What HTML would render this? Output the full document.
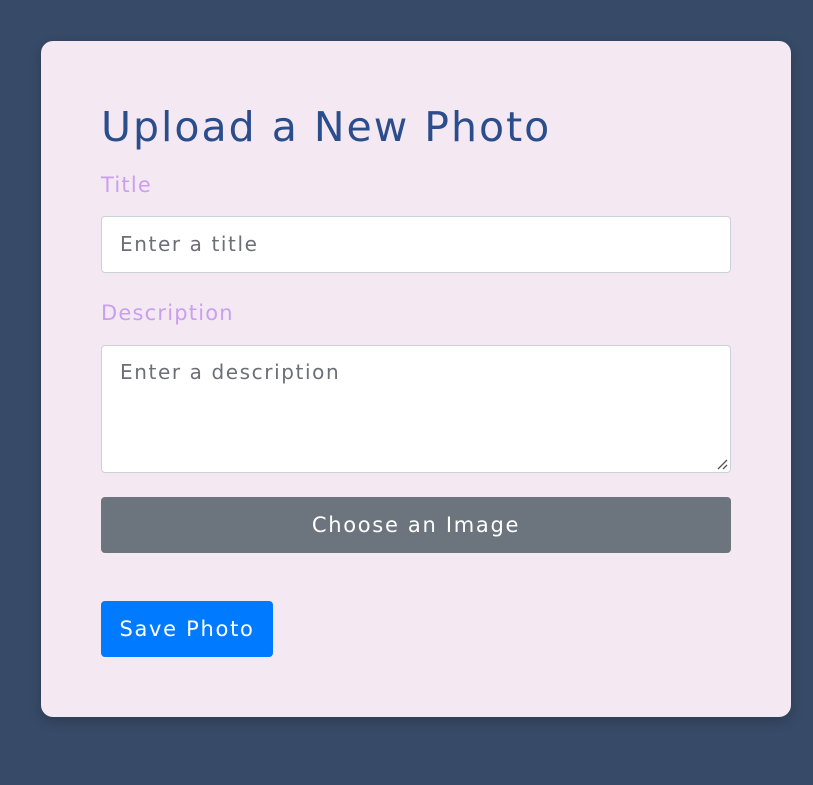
<!DOCTYPE html>
<html><head><style>
html,body{margin:0;padding:0;}
body{width:813px;height:785px;background:#374a67;font-family:"DejaVu Sans","Liberation Sans",sans-serif;position:relative;overflow:hidden;}
.card{position:absolute;left:41px;top:41px;width:750px;height:676px;background:#f4e8f3;border-radius:12px;box-shadow:0 4px 12px rgba(0,0,0,.2);}
h1{position:absolute;left:60px;top:60px;margin:0;font-weight:normal;font-size:41px;color:#2b4d8c;letter-spacing:2px;line-height:52px;white-space:nowrap;}
.lbl{position:absolute;left:60px;font-size:21px;color:#c9a0ee;font-weight:normal;letter-spacing:1.2px;}
.inp{position:absolute;left:60px;background:#fff;border:1px solid #cdd1d8;border-radius:4px;box-sizing:border-box;width:630px;}
.ph{position:absolute;left:18px;font-size:20px;color:#6c6f75;font-weight:normal;letter-spacing:1.6px;white-space:nowrap;}
.btn{position:absolute;border-radius:4px;color:#fff;font-size:21px;text-align:center;letter-spacing:1.7px;font-weight:normal;}
</style></head><body>
<div class="card">
<h1>Upload a New Photo</h1>
<div class="lbl" style="top:132px">Title</div>
<div class="inp" style="top:175px;height:57px"><div class="ph" style="top:15px">Enter a title</div></div>
<div class="lbl" style="top:260px">Description</div>
<div class="inp" style="top:304px;height:128px"><div class="ph" style="top:14px">Enter a description</div>
<svg style="position:absolute;right:2px;bottom:2px" width="12" height="12"><path d="M2 11L11 2M7 11L11 7" stroke="#555" stroke-width="1.3"/></svg></div>
<div class="btn" style="left:60px;top:456px;width:630px;height:56px;line-height:56px;background:#6c757d">Choose an Image</div>
<div class="btn" style="left:60px;top:560px;width:172px;height:56px;line-height:56px;background:#007bff">Save Photo</div>
</div>
</body></html>
